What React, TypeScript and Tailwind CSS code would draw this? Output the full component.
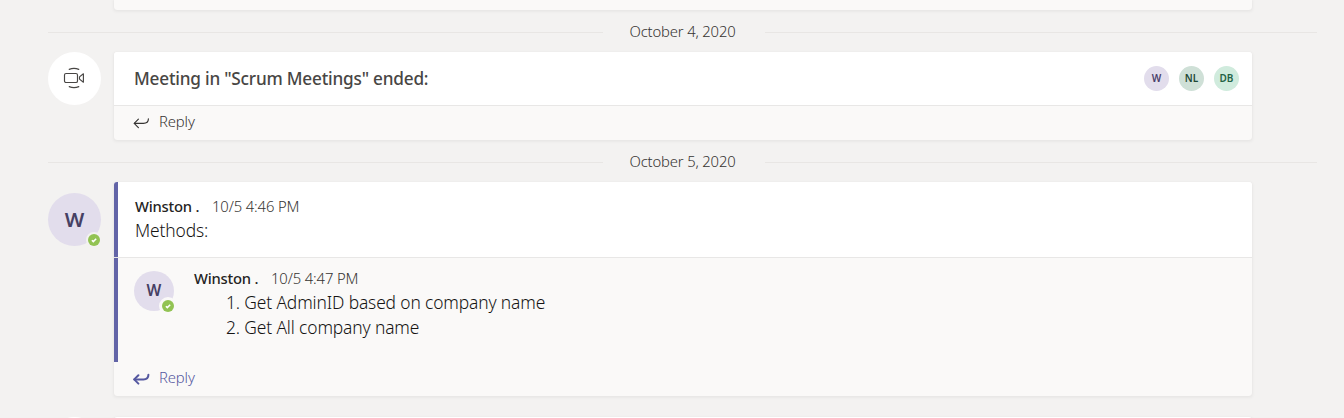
import React from "react";

const cardClass =
  "w-[1138px] shrink-0 overflow-hidden rounded-[3px] bg-[#faf9f8] shadow-[0_1px_3px_1px_rgba(0,0,0,0.045),0_0_1px_rgba(0,0,0,0.06)]";

function DateDivider({ label }: { label: string }) {
  return (
    <div className="flex h-[42px] items-start pt-[11px]">
      <div className="mt-[11px] h-px w-[555px] bg-[#e8e6e4]" />
      <div className="w-[162px] pr-[3px] text-center text-[14.8px] leading-5 font-[350] tracking-[-0.15px] whitespace-nowrap text-[#363432]">
        {label}
      </div>
      <div className="mt-[11px] h-px w-[552px] bg-[#e8e6e4]" />
    </div>
  );
}

function ReplyIcon({ bold = false }: { bold?: boolean }) {
  return (
    <svg
      width="18"
      height="14"
      viewBox="0 0 18 14"
      fill="none"
      stroke="currentColor"
      strokeWidth={bold ? 2 : 1.15}
      strokeLinecap="round"
      strokeLinejoin="round"
    >
      <path d="M5.4 3.2 1.2 7.4l4.2 4.2" />
      <path d="M1.4 7.4h9c3 0 5-1.7 5-4.6" />
    </svg>
  );
}

function Presence({ className }: { className: string }) {
  return (
    <span className={`absolute rounded-full ${className}`}>
      <svg width="12" height="12" viewBox="0 0 12 12" fill="none">
        <circle cx="6" cy="6" r="6" fill="#92c353" />
        <path d="m3.9 6.2 1.4 1.4 2.9-2.9" stroke="#fff" strokeWidth="1.5" />
      </svg>
    </span>
  );
}

function Participant({ initials, className }: { initials: string; className: string }) {
  return (
    <div
      className={`flex size-[25px] items-center justify-center rounded-full text-[10px] font-semibold ${className}`}
    >
      {initials}
    </div>
  );
}

function Byline({ time }: { time: string }) {
  return (
    <div className="flex gap-[13px] text-[14.8px] leading-5 whitespace-nowrap">
      <span className="w-[64px] font-[550] tracking-[-0.22px] text-[#252423]">Winston .</span>
      <span className="font-[350] tracking-[-0.12px] text-[#363432]">{time}</span>
    </div>
  );
}

function MeetingIcon() {
  return (
    <svg
      width="22"
      height="22"
      viewBox="0 0 22 22"
      fill="none"
      stroke="#484644"
      strokeWidth="1.15"
      strokeLinecap="round"
      strokeLinejoin="round"
    >
      <rect x="1.5" y="6.5" width="13" height="9" rx="1.6" />
      <path d="m20.4 6.8-3.9 3.1v2.2l3.9 3.1Z" />
      <path d="M6.2 2.4c3-1.2 6.6-1.2 9.6 0M6.2 19.6c3 1.2 6.6 1.2 9.6 0" />
    </svg>
  );
}

export default function App() {
  return (
    <div className="h-[418px] w-[1344px] overflow-hidden bg-[#f3f2f1] pl-12 font-['Noto_Sans','Segoe_UI',sans-serif] text-[#252423]">
      <div className="pl-[66px]">
        <div className={`${cardClass} h-[10px] rounded-t-none`} />
      </div>

      <DateDivider label="October 4, 2020" />

      <div className="flex gap-[13px]">
        <div className="flex size-[53px] shrink-0 items-center justify-center rounded-full bg-white pr-px pb-px">
          <MeetingIcon />
        </div>
        <div className={cardClass}>
          <div className="flex h-[54px] items-center justify-between border-b border-[#e8e7e6] bg-white pr-[13px] pl-5">
            <h2 className="text-[17.2px] font-[550] tracking-[-0.21px] whitespace-nowrap text-[#484644]">
              Meeting in "Scrum Meetings" ended:
            </h2>
            <div className="flex gap-[10px]">
              <Participant initials="W" className="bg-[#e2ddec] text-[#4b3f6b]" />
              <Participant initials="NL" className="bg-[#cfe0d7] text-[#1f4935]" />
              <Participant initials="DB" className="bg-[#d0ebdd] text-[#246345]" />
            </div>
          </div>
          <div className="flex h-[34px] items-center gap-2 pb-[3px] pl-[19px] text-[14.8px] font-[350] text-[#363432]">
            <span className="pt-[3px]"><ReplyIcon /></span>
            <span className="tracking-[-0.1px]">Reply</span>
          </div>
        </div>
      </div>

      <DateDivider label="October 5, 2020" />

      <div className="flex h-[214px] gap-[13px]">
        <div className="relative mt-[11px] flex size-[53px] shrink-0 items-center justify-center rounded-full bg-[#e2ddec] text-[20.5px] font-semibold text-[#464063]">
          W
          <Presence className="right-[-1px] bottom-[-2px] border-2 border-[#f3f2f1] bg-[#f3f2f1]" />
        </div>
        <div className={cardClass}>
          <div className="h-[76px] border-b border-[#e8e7e6] bg-white">
            <div className="h-[75px] border-l-4 border-[#6264a7] pt-[14px] pl-[17px]">
              <Byline time="10/5 4:46 PM" />
              <p className="mt-[2px] text-[17.4px] leading-[25px] font-[350] tracking-[-0.13px] text-[#151413]">Methods:</p>
            </div>
          </div>
          <div className="flex h-[104px] gap-5 border-l-4 border-[#6264a7] pl-4">
            <div className="relative mt-[13px] flex size-10 shrink-0 items-center justify-center rounded-full bg-[#e2ddec] text-[15.5px] font-semibold text-[#464063]">
              W
              <Presence className="right-[-3px] bottom-[-4px] border-[3px] border-[#faf9f8] bg-[#faf9f8]" />
            </div>
            <div className="pt-[10px]">
              <Byline time="10/5 4:47 PM" />
              <ol className="mt-[2px] list-inside list-decimal pl-8 text-[17.4px] leading-[25px] font-[350] tracking-[-0.13px] text-[#151413]">
                <li>Get AdminID based on company name</li>
                <li>Get All company name</li>
              </ol>
            </div>
          </div>
          <div className="flex h-[34px] items-center gap-2 pb-[3px] pl-[19px] text-[14.8px] font-[350] text-[#5558a0]">
            <span className="pt-[3px]"><ReplyIcon bold /></span>
            <span className="tracking-[-0.1px]">Reply</span>
          </div>
        </div>
      </div>

      <div className="mt-[21px] flex gap-[13px]">
        <div className="size-[53px] shrink-0 rounded-full bg-white" />
        <div className={`${cardClass} h-[53px] bg-white`} />
      </div>
    </div>
  );
}
